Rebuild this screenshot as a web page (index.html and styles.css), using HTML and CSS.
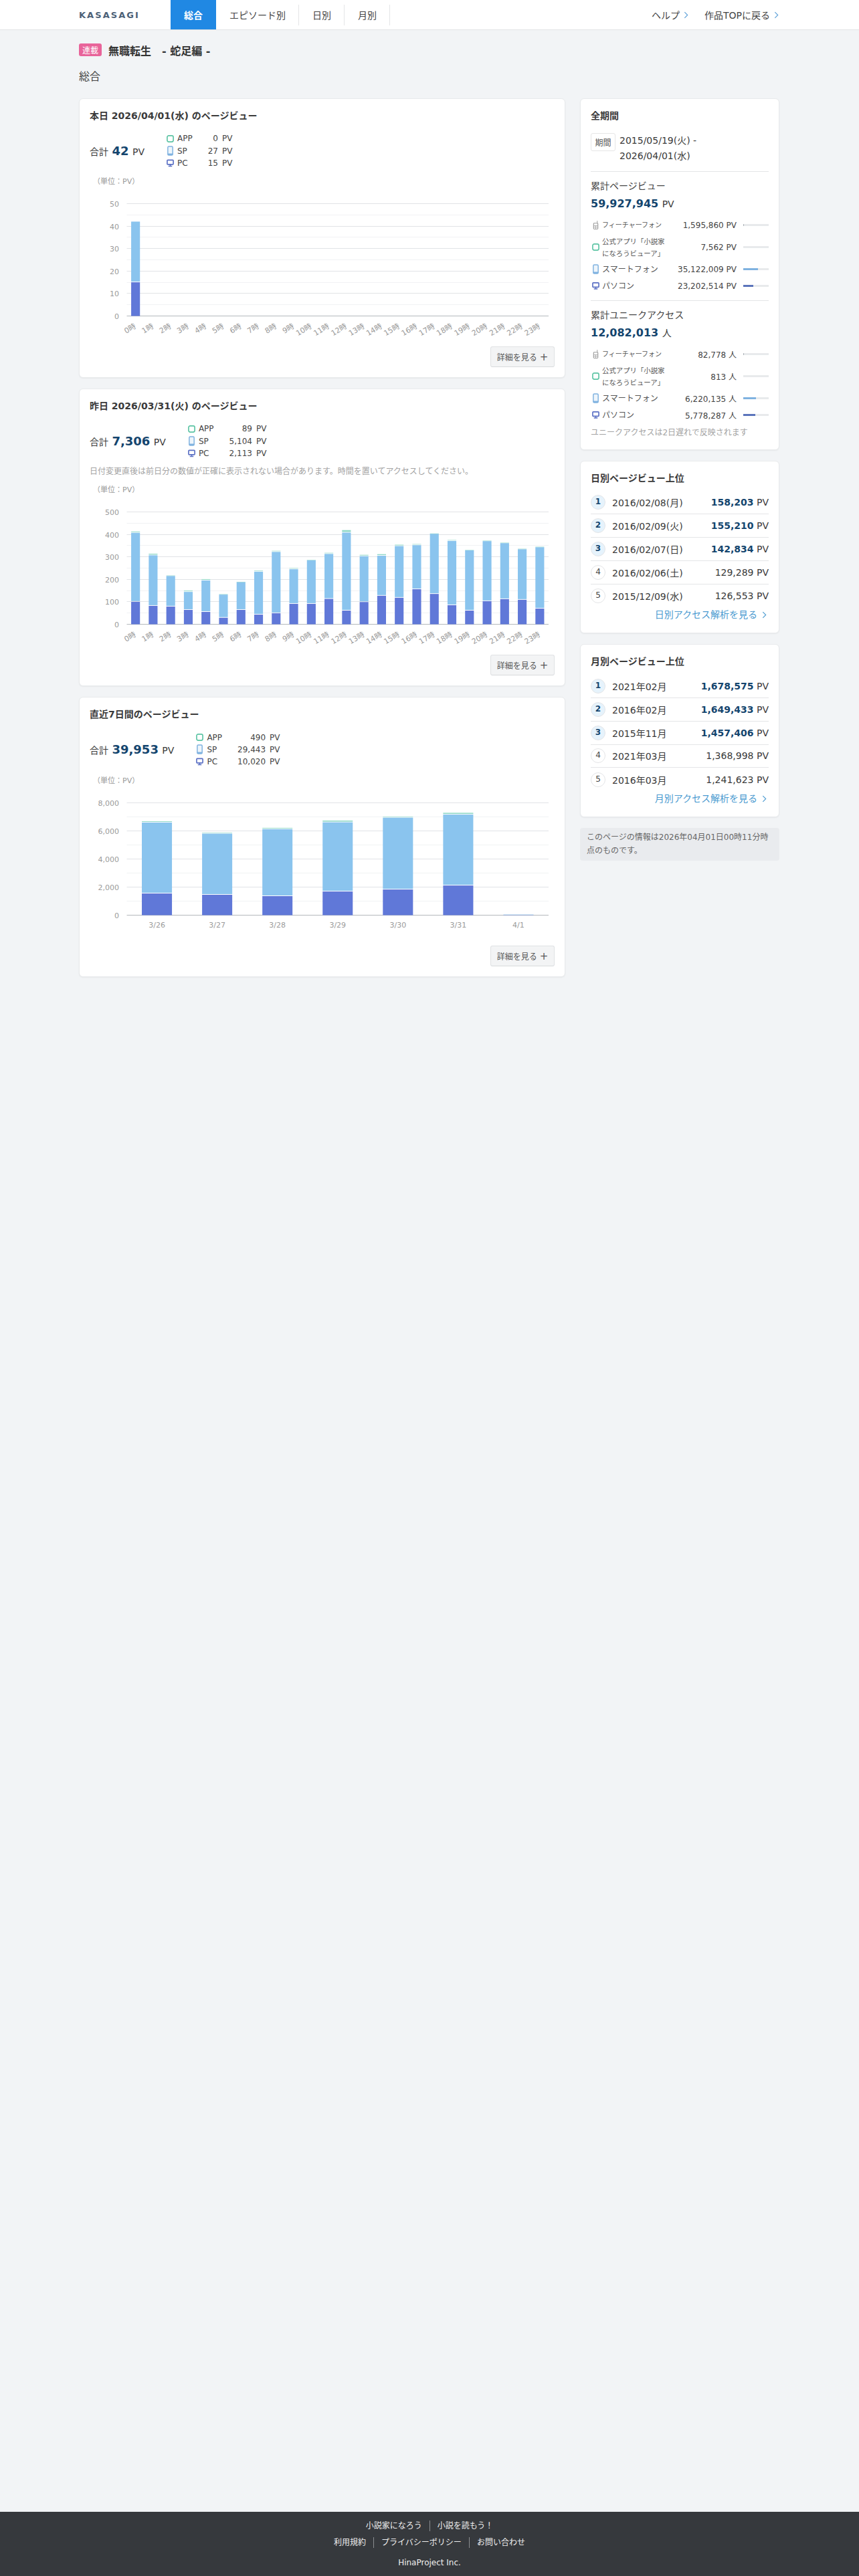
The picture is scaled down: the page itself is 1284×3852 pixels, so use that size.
FILE: index.html
```html
<!DOCTYPE html>
<html lang="ja">
<head>
<meta charset="utf-8">
<title>KASASAGI</title>
<link rel="stylesheet" href="styles.css">
</head>
<body>
<svg class="defs" width="0" height="0" aria-hidden="true">
  <symbol id="i-app" viewBox="0 0 12 12"><rect x="1" y="1" width="10" height="10" rx="2.5" fill="none" stroke="#5cc4a4" stroke-width="1.8"/></symbol>
  <symbol id="i-sp" viewBox="0 0 12 16"><rect x="2" y="1" width="8" height="14" rx="1.6" fill="#eef5fb" stroke="#7fb2e0" stroke-width="1.6"/><rect x="2" y="12.4" width="8" height="2.6" fill="#7fb2e0"/></symbol>
  <symbol id="i-pc" viewBox="0 0 12 12"><rect x="1" y="1" width="10" height="7" rx="1" fill="none" stroke="#5a6fc4" stroke-width="1.8"/><path d="M6 8v2.5M3 11h6" fill="none" stroke="#5a6fc4" stroke-width="1.6"/></symbol>
  <symbol id="i-fp" viewBox="0 0 12 16"><path d="M8.5 1v4" fill="none" stroke="#9a9a9a" stroke-width="1"/><rect x="2.5" y="5" width="7" height="9.5" rx="1" fill="none" stroke="#9a9a9a" stroke-width="1.2"/><path d="M2.5 9h7M2.5 11.5h7M6 9v5" fill="none" stroke="#9a9a9a" stroke-width=".8"/></symbol>
  <symbol id="i-chev" viewBox="0 0 8 12"><path d="M1.5 1l5 5-5 5" fill="none" stroke="currentColor" stroke-width="1.3"/></symbol>
</svg>

<header class="topbar">
  <div class="topbar-inner">
    <div class="logo">KASASAGI</div>
    <nav class="tabs">
      <a class="tab tab-active">総合</a>
      <a class="tab tab-sep">エピソード別</a>
      <a class="tab tab-sep">日別</a>
      <a class="tab tab-sep">月別</a>
    </nav>
    <div class="toplinks">
      <a class="toplink">ヘルプ<svg class="chev"><use href="#i-chev"/></svg></a>
      <a class="toplink">作品TOPに戻る<svg class="chev"><use href="#i-chev"/></svg></a>
    </div>
  </div>
</header>

<div class="page">
  <div class="titlerow"><span class="badge">連載</span><h1 class="work">無職転生　- 蛇足編 -</h1></div>
  <h2 class="heading">総合</h2>

  <div class="columns">
    <main class="main">
      <section class="card chartcard">
        <h3 class="cardtitle">本日 2026/04/01(水) のページビュー</h3>
        <div class="summary">
          <div class="total">合計 <b class="big">42</b> PV</div>
          <div class="legend">
            <svg class="li li-app"><use href="#i-app"/></svg><span>APP</span><span class="num">0</span><span>PV</span>
            <svg class="li li-sp"><use href="#i-sp"/></svg><span>SP</span><span class="num">27</span><span>PV</span>
            <svg class="li li-pc"><use href="#i-pc"/></svg><span>PC</span><span class="num">15</span><span>PV</span>
          </div>
        </div>
        <div class="unit">（単位：PV）</div>
        <div class="chart" data-chart="today"></div>
        <div class="actions"><button class="more">詳細を見る <span class="plus">+</span></button></div>
      </section>

      <section class="card chartcard">
        <h3 class="cardtitle">昨日 2026/03/31(火) のページビュー</h3>
        <div class="summary">
          <div class="total">合計 <b class="big">7,306</b> PV</div>
          <div class="legend">
            <svg class="li li-app"><use href="#i-app"/></svg><span>APP</span><span class="num">89</span><span>PV</span>
            <svg class="li li-sp"><use href="#i-sp"/></svg><span>SP</span><span class="num">5,104</span><span>PV</span>
            <svg class="li li-pc"><use href="#i-pc"/></svg><span>PC</span><span class="num">2,113</span><span>PV</span>
          </div>
        </div>
        <p class="caution">日付変更直後は前日分の数値が正確に表示されない場合があります。時間を置いてアクセスしてください。</p>
        <div class="unit">（単位：PV）</div>
        <div class="chart" data-chart="yesterday"></div>
        <div class="actions"><button class="more">詳細を見る <span class="plus">+</span></button></div>
      </section>

      <section class="card chartcard">
        <h3 class="cardtitle">直近7日間のページビュー</h3>
        <div class="summary">
          <div class="total">合計 <b class="big">39,953</b> PV</div>
          <div class="legend">
            <svg class="li li-app"><use href="#i-app"/></svg><span>APP</span><span class="num">490</span><span>PV</span>
            <svg class="li li-sp"><use href="#i-sp"/></svg><span>SP</span><span class="num">29,443</span><span>PV</span>
            <svg class="li li-pc"><use href="#i-pc"/></svg><span>PC</span><span class="num">10,020</span><span>PV</span>
          </div>
        </div>
        <div class="unit">（単位：PV）</div>
        <div class="chart" data-chart="week"></div>
        <div class="actions"><button class="more">詳細を見る <span class="plus">+</span></button></div>
      </section>
    </main>

    <aside class="side">
      <section class="card">
        <h3 class="cardtitle">全期間</h3>
        <div class="period">
          <span class="periodlabel">期間</span>
          <span class="perioddates">2015/05/19(火) -<br>2026/04/01(水)</span>
        </div>
        <div class="stat">
          <div class="statname">累計ページビュー</div>
          <div class="statvalue"><b class="figure">59,927,945</b> PV</div>
          <div class="dev"><svg class="di"><use href="#i-fp"/></svg><span class="devname devname-xs">フィーチャーフォン</span><span class="devval">1,595,860 PV</span><span class="meter"><i class="fill fill-fp" style="width:3%"></i></span></div>
          <div class="dev dev-tall"><svg class="di"><use href="#i-app"/></svg><span class="devname devname-sm">公式アプリ「小説家<br>になろうビューア」</span><span class="devval">7,562 PV</span><span class="meter"></span></div>
          <div class="dev"><svg class="di"><use href="#i-sp"/></svg><span class="devname">スマートフォン</span><span class="devval">35,122,009 PV</span><span class="meter"><i class="fill fill-sp" style="width:58%"></i></span></div>
          <div class="dev"><svg class="di"><use href="#i-pc"/></svg><span class="devname">パソコン</span><span class="devval">23,202,514 PV</span><span class="meter"><i class="fill fill-pc" style="width:39%"></i></span></div>
        </div>
        <div class="stat stat-last">
          <div class="statname">累計ユニークアクセス</div>
          <div class="statvalue"><b class="figure">12,082,013</b> 人</div>
          <div class="dev"><svg class="di"><use href="#i-fp"/></svg><span class="devname devname-xs">フィーチャーフォン</span><span class="devval">82,778 人</span><span class="meter"><i class="fill fill-fp" style="width:1%"></i></span></div>
          <div class="dev dev-tall"><svg class="di"><use href="#i-app"/></svg><span class="devname devname-sm">公式アプリ「小説家<br>になろうビューア」</span><span class="devval">813 人</span><span class="meter"></span></div>
          <div class="dev"><svg class="di"><use href="#i-sp"/></svg><span class="devname">スマートフォン</span><span class="devval">6,220,135 人</span><span class="meter"><i class="fill fill-sp" style="width:50%"></i></span></div>
          <div class="dev"><svg class="di"><use href="#i-pc"/></svg><span class="devname">パソコン</span><span class="devval">5,778,287 人</span><span class="meter"><i class="fill fill-pc" style="width:47%"></i></span></div>
          <p class="uanote">ユニークアクセスは2日遅れで反映されます</p>
        </div>
      </section>

      <section class="card rankcard">
        <h3 class="cardtitle">日別ページビュー上位</h3>
        <ol class="rank">
          <li class="rankrow top"><span class="no">1</span><span class="when">2016/02/08(月)</span><span class="pv"><b>158,203</b> PV</span></li>
          <li class="rankrow top"><span class="no">2</span><span class="when">2016/02/09(火)</span><span class="pv"><b>155,210</b> PV</span></li>
          <li class="rankrow top"><span class="no">3</span><span class="when">2016/02/07(日)</span><span class="pv"><b>142,834</b> PV</span></li>
          <li class="rankrow"><span class="no">4</span><span class="when">2016/02/06(土)</span><span class="pv">129,289 PV</span></li>
          <li class="rankrow"><span class="no">5</span><span class="when">2015/12/09(水)</span><span class="pv">126,553 PV</span></li>
        </ol>
        <a class="ranklink">日別アクセス解析を見る<svg class="chev"><use href="#i-chev"/></svg></a>
      </section>

      <section class="card rankcard">
        <h3 class="cardtitle">月別ページビュー上位</h3>
        <ol class="rank">
          <li class="rankrow top"><span class="no">1</span><span class="when">2021年02月</span><span class="pv"><b>1,678,575</b> PV</span></li>
          <li class="rankrow top"><span class="no">2</span><span class="when">2016年02月</span><span class="pv"><b>1,649,433</b> PV</span></li>
          <li class="rankrow top"><span class="no">3</span><span class="when">2015年11月</span><span class="pv"><b>1,457,406</b> PV</span></li>
          <li class="rankrow"><span class="no">4</span><span class="when">2021年03月</span><span class="pv">1,368,998 PV</span></li>
          <li class="rankrow"><span class="no">5</span><span class="when">2016年03月</span><span class="pv">1,241,623 PV</span></li>
        </ol>
        <a class="ranklink">月別アクセス解析を見る<svg class="chev"><use href="#i-chev"/></svg></a>
      </section>

      <p class="infonote">このページの情報は2026年04月01日00時11分時<br>点のものです。</p>
    </aside>
  </div>
</div>

<footer class="footer">
  <div class="fline"><a class="flink">小説家になろう</a><a class="flink">小説を読もう！</a></div>
  <div class="fline"><a class="flink">利用規約</a><a class="flink">プライバシーポリシー</a><a class="flink">お問い合わせ</a></div>
  <div class="copy">HinaProject Inc.</div>
</footer>
<script src="charts.js"></script>
</body>
</html>
```

FILE: styles.css
```css
* { box-sizing: border-box; }
html, body { margin: 0; padding: 0; }
body {
  min-height: 3852px;
  display: flex;
  flex-direction: column;
  background: #f2f4f6;
  color: #3a3a3a;
  font-family: "DejaVu Sans", "Noto Sans CJK JP", sans-serif;
  font-size: 14px;
}
.defs { position: absolute; }
h1, h2, h3, p, ol { margin: 0; padding: 0; }
ol { list-style: none; }

.topbar { height: 45px; background: #fff; border-bottom: 1px solid #e2e3e5; }
.topbar-inner { width: 1048px; margin: 0 auto; height: 44px; display: flex; align-items: center; }
.logo { width: 137px; font-size: 13px; font-weight: 700; letter-spacing: 2.05px; color: #4c6177; }
.tabs { display: flex; height: 44px; align-items: center; }
.tab { display: flex; align-items: center; height: 31px; padding: 0 20px; color: #444; }
.tab-sep { padding-right: 19px; border-right: 1px solid #e4e5e7; }
.tab-active { height: 44px; background: #2088e3; color: #fff; font-weight: 700; }
.toplinks { margin-left: auto; display: flex; gap: 24px; padding-right: 2px; }
.toplink { display: flex; align-items: center; gap: 6px; color: #444; }
.chev { width: 7px; height: 11px; color: #5a9fd8; }

.page { width: 1048px; margin: 0 auto; }
.titlerow { display: flex; align-items: center; margin-top: 20px; height: 19px; }
.badge { display: flex; align-items: center; justify-content: center; width: 34px; height: 19px; background: #e8649a; color: #fff; font-size: 12px; border-radius: 3px; }
.work { margin-left: 10px; font-size: 16px; font-weight: 700; color: #333; }
.heading { margin-top: 19px; font-size: 16px; font-weight: 400; line-height: 24px; color: #444; }
.columns { display: grid; grid-template-columns: 727px 298px; column-gap: 22px; margin-top: 20px; align-items: start; }
.main, .side { display: flex; flex-direction: column; gap: 16px; }

.card { background: #fff; border: 1px solid #e8eaec; border-radius: 6px; padding: 15px; box-shadow: 0 1px 2px rgba(0,0,0,.05); }
.cardtitle { font-size: 14px; font-weight: 700; line-height: 20px; color: #3a3a3a; }

.summary { display: flex; align-items: center; margin-top: 15px; }
.total { font-size: 14px; margin-right: 33px; }
.big { font-size: 18px; color: #14456e; margin: 0 1px; }
.legend { display: grid; grid-template-columns: 16px auto auto auto; grid-auto-rows: 18.4px; align-items: center; font-size: 12px; color: #444; }
.legend .num { text-align: right; margin-left: 23px; margin-right: 6px; }
.li { width: 11px; height: 11px; }
.li-sp { height: 15px; }
.li-pc { height: 12px; }
.caution { margin-top: 9px; font-size: 12px; line-height: 18px; color: #a3a3a3; }
.unit { margin-top: 11px; padding-left: 5px; font-size: 11px; line-height: 16px; color: #999; }
.chart { margin: 0 -15px; height: 238px; }
.chart svg { display: block; }
.actions { display: flex; justify-content: flex-end; }
.more { width: 96px; height: 31px; padding: 0; background: #f3f4f5; border: 1px solid #e0e2e4; border-bottom-color: #d8dadc; border-radius: 3px; font: inherit; font-size: 12px; color: #555; }
.plus { font-size: 15px; line-height: 1; }

.axis { font-size: 11px; fill: #9a9a9a; }
.grid-major { stroke: #e1e3e6; }
.grid-minor { stroke: #f1f2f4; }
.grid-zero { stroke: #b4b8bc; }
.seg-pc { fill: #6078d8; }
.seg-sp { fill: #8ac4ee; }
.seg-app { fill: #8fd8c8; }

.period { display: flex; align-items: flex-start; margin-top: 16px; margin-bottom: 1px; }
.periodlabel { display: flex; align-items: center; justify-content: center; width: 37px; height: 27px; border: 1px solid #e6e6e6; border-radius: 3px; font-size: 12px; color: #555; }
.perioddates { margin-left: 6px; line-height: 23px; margin-top: -.5px; }
.stat { margin-top: 11px; border-top: 1px solid #e4e5e7; padding-top: 11px; }
.stat-last { margin-top: 8.5px; padding-bottom: .5px; }
.statname { font-size: 14px; line-height: 20px; color: #444; }
.statvalue { margin-top: 5px; margin-bottom: 7.5px; line-height: 24px; font-size: 14px; }
.figure { font-size: 16px; color: #14456e; margin-right: 1px; }
.dev { display: flex; align-items: center; height: 25px; }
.dev-tall { height: 41px; }
.di { width: 11px; height: 15px; margin-left: 2px; margin-right: 4px; flex: none; }
.devname { flex: 1; font-size: 12px; line-height: 18px; color: #555; }
.devname-sm { font-size: 10.4px; }
.devname-xs { font-size: 10px; }
.devval { font-size: 12px; color: #444; }
.meter { display: block; width: 38px; height: 3px; margin-left: 10px; background: #e8eaec; flex: none; }
.fill { display: block; height: 3px; }
.fill-fp { background: #aab0b6; }
.fill-sp { background: #7fb2e0; }
.fill-pc { background: #5b74bb; }
.uanote { margin-top: 5px; font-size: 12px; line-height: 18px; color: #a3a3a3; white-space: nowrap; }

.rank { margin-top: 10px; }
.rankrow { display: flex; align-items: center; height: 34.75px; border-bottom: 1px solid #e4e5e7; }
.rankrow:last-child { border-bottom: none; }
.no { display: flex; align-items: center; justify-content: center; width: 22px; height: 22px; border: 1px solid #e4e5e7; border-radius: 50%; font-size: 12px; color: #444; padding-bottom: 2px; }
.top .no { background: #e6f3fc; color: #14456e; font-weight: 700; }
.when { margin-left: 10px; }
.pv { margin-left: auto; }
.pv b { color: #14456e; }
.ranklink { display: flex; align-items: center; justify-content: flex-end; gap: 7px; margin-top: 1px; padding-right: 3px; margin-bottom: 2px; line-height: 20px; color: #4a9ad0; }
.ranklink .chev { color: #4a9ad0; }
.infonote { padding: 4px 10px 5px; background: #e9ebee; border-radius: 4px; font-size: 12px; line-height: 20px; color: #666; }

.footer { margin-top: auto; height: 96px; background: #36393d; color: #f0f0f0; font-size: 12px; text-align: center; padding-top: 8px; }
.fline { display: flex; justify-content: center; height: 25px; align-items: center; }
.flink { padding: 0 11px; line-height: 16px; }
.flink + .flink { border-left: 1px solid #8a8d90; }
.copy { margin-top: 10px; line-height: 16px; }
```

FILE: charts.js
```javascript
var CHARTS = {
  today: {
    max: 50, major: 10, rotate: true, barRatio: 0.5,
    labels: hours(),
    pc: [15], sp: [42], app: [42]
  },
  yesterday: {
    max: 500, major: 100, rotate: true, barRatio: 0.5,
    labels: hours(),
    pc: [100,82,79,64,55,29,64,43,49,91,91,113,61,99,127,118,156,135,85,61,103,112,109,70],
    sp: [407,307,215,144,195,132,188,234,322,245,285,313,408,303,305,348,352,403,371,329,370,361,334,343],
    app: [413,314,217,150,201,134,189,239,327,250,287,318,419,309,312,354,357,404,375,331,372,363,336,345]
  },
  week: {
    max: 8000, major: 2000, rotate: false, barRatio: 0.5,
    labels: ["3/26","3/27","3/28","3/29","3/30","3/31","4/1"],
    pc: [1546,1452,1357,1688,1830,2114,15],
    sp: [6596,5807,6123,6612,6943,7164,42],
    app: [6691,5886,6217,6738,7022,7290,42]
  }
};

function hours() {
  var out = [];
  for (var i = 0; i < 24; i++) out.push(i + "時");
  return out;
}

function fmt(n) {
  return String(n).replace(/\B(?=(\d{3})+$)/g, ",");
}

function renderChart(box, c) {
  var left = 70.5, right = 701, top = 24.5, bottom = 192.5, NS = "http://www.w3.org/2000/svg";
  var h = bottom - top;
  var svg = document.createElementNS(NS, "svg");
  svg.setAttribute("width", 725);
  svg.setAttribute("height", 238);

  function el(name, attrs, text) {
    var e = document.createElementNS(NS, name);
    for (var k in attrs) e.setAttribute(k, attrs[k]);
    if (text !== undefined) e.textContent = text;
    svg.appendChild(e);
    return e;
  }

  var steps = c.max / c.major * 2;
  for (var i = 0; i <= steps; i++) {
    var y = Math.round(top + h * i / steps - 0.5) + 0.5;
    var major = i % 2 === 0;
    el("line", { x1: left, x2: right, y1: y, y2: y, "class": i === steps ? "grid-zero" : major ? "grid-major" : "grid-minor" });
    if (major) {
      el("text", { x: 59, y: y + 4, "text-anchor": "end", "class": "axis" }, fmt(c.max - c.major * i / 2));
    }
  }

  var slot = (right - left) / c.labels.length;
  var bw = slot * c.barRatio;
  var sc = h / c.max;
  c.labels.forEach(function (lab, idx) {
    var cx = left + slot * (idx + 0.5);
    var x = cx - bw / 2;
    var p = c.pc[idx] || 0, s = c.sp[idx] || 0, a = c.app[idx] || 0;
    if (p) el("rect", { x: x, width: bw, y: bottom - p * sc, height: p * sc, "class": "seg-pc" });
    if (s > p) el("rect", { x: x, width: bw, y: bottom - s * sc, height: Math.max((s - p) * sc - 1, 0.5), "class": "seg-sp" });
    if (a > s) el("rect", { x: x, width: bw, y: bottom - a * sc, height: Math.max((a - s) * sc - 1, 0.5), "class": "seg-app" });
    if (c.rotate) {
      var tx = cx + 1.5, ty = bottom + 17.5;
      el("text", { x: tx, y: ty, "text-anchor": "end", "class": "axis", transform: "rotate(-30 " + tx + " " + ty + ")" }, lab);
    } else {
      el("text", { x: cx, y: bottom + 18, "text-anchor": "middle", "class": "axis" }, lab);
    }
  });
  box.appendChild(svg);
}

document.querySelectorAll("[data-chart]").forEach(function (box) {
  renderChart(box, CHARTS[box.getAttribute("data-chart")]);
});
```
